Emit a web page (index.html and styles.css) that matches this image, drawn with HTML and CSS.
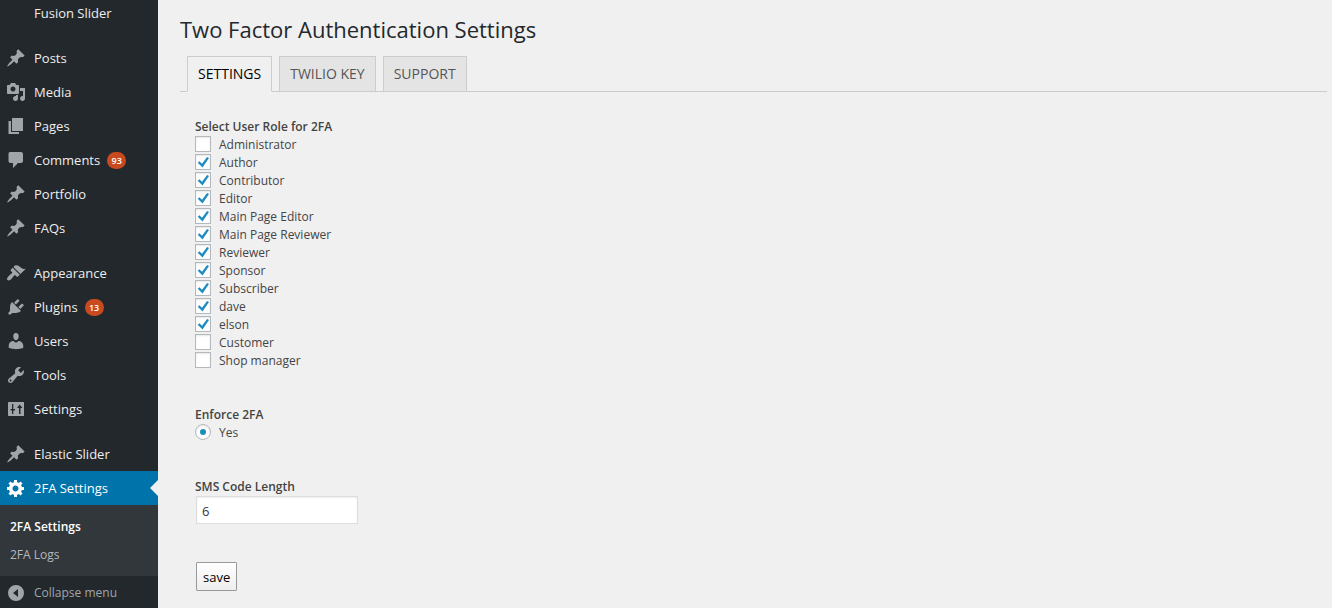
FILE: index.html
```html
<!DOCTYPE html>
<html lang="en">
<head>
<meta charset="utf-8">
<title>Two Factor Authentication Settings</title>
<link rel="stylesheet" href="styles.css">
</head>
<body>
<svg class="sprite" aria-hidden="true">
  <symbol id="pin" viewBox="0 0 20 20"><path d="M10.44 3.02l1.82-1.82 6.36 6.35-1.83 1.82c-1.05-.68-2.48-.57-3.41.36l-.75.75c-.92.93-1.04 2.35-.35 3.41l-1.83 1.82-2.41-2.41-2.8 2.79c-.42.42-3.38 2.71-3.8 2.29s1.86-3.39 2.28-3.81l2.79-2.79L4.1 9.36l1.83-1.82c1.05.69 2.48.57 3.4-.36l.75-.75c.93-.92 1.05-2.35.36-3.41z"/></symbol>
</svg>
<div class="layout">
  <nav class="sidebar">
    <ul class="menu">
      <li><a class="item item-first" href="#">Fusion Slider</a></li>
      <li class="gap-first"></li>
      <li><a class="item" href="#"><svg class="icon"><use href="#pin"/></svg>Posts</a></li>
      <li><a class="item" href="#"><svg class="icon" viewBox="0 0 20 20"><path d="M13 11V4c0-.55-.45-1-1-1h-1.67L9 1H5L3.67 3H2c-.55 0-1 .45-1 1v7c0 .55.45 1 1 1h10c.55 0 1-.45 1-1zM7 4.5c1.38 0 2.5 1.12 2.5 2.5S8.38 9.5 7 9.5 4.5 8.38 4.5 7 5.62 4.5 7 4.5zM14 6h5v10.5c0 1.38-1.12 2.5-2.5 2.5S14 17.88 14 16.5s1.12-2.5 2.5-2.5c.17 0 .34.02.5.05V9h-3V6zm-4 8.05V13h2v3.5c0 1.38-1.12 2.5-2.5 2.5S7 17.88 7 16.5 8.12 14 9.5 14c.17 0 .34.02.5.05z"/></svg>Media</a></li>
      <li><a class="item" href="#"><svg class="icon" viewBox="0 0 20 20"><path d="M6 15V2h11v13H6zm-1 1h8v2H2.500V5H5v11z"/></svg>Pages</a></li>
      <li><a class="item" href="#"><svg class="icon" viewBox="0 0 20 20"><path d="M4 2h11c1.1 0 2 .9 2 2v7c0 1.1-.9 2-2 2h-3l-5 5v-5H4.500c-1.100 0-2-.9-2-2V4c0-1.100.6-2 1.500-2z"/></svg>Comments<span class="badge">93</span></a></li>
      <li><a class="item" href="#"><svg class="icon"><use href="#pin"/></svg>Portfolio</a></li>
      <li><a class="item" href="#"><svg class="icon"><use href="#pin"/></svg>FAQs</a></li>
      <li class="gap"></li>
      <li><a class="item" href="#"><svg class="icon" viewBox="0 0 20 20"><path d="M14.48 11.06L7.41 3.99l1.5-1.5c.5-.56 2.3-.47 3.51.32 1.21.8 1.43 1.28 2.91 2.1 1.18.64 2.45 1.26 4.45.85zm-.71.71L6.7 4.7 4.93 6.47c-.39.39-.39 1.02 0 1.41l1.06 1.06c.39.39.39 1.03 0 1.42-.6.6-1.43 1.11-2.21 1.69-.35.26-.7.53-1.01.84C1.43 14.23.4 16.08 1.4 17.07c.99 1 2.84-.03 4.18-1.36.31-.31.58-.66.85-1.02.57-.78 1.08-1.61 1.69-2.21.39-.39 1.02-.39 1.41 0l1.06 1.06c.39.39 1.02.39 1.41 0z"/></svg>Appearance</a></li>
      <li><a class="item" href="#"><svg class="icon" viewBox="0 0 20 20"><path d="M13.11 4.36L9.87 7.6 8 5.73l3.24-3.24c.35-.34 1.05-.2 1.56.32.52.51.66 1.21.31 1.55zm-8 1.77l.91-1.12 9.01 9.01-1.19.84c-.71.71-2.63 1.16-3.82 1.16H6.14L4.9 17.26c-.59.59-1.54.59-2.12 0-.59-.58-.59-1.53 0-2.12l1.24-1.24v-3.88c0-1.13.4-3.19 1.09-3.89zm7.26 3.97l3.24-3.24c.34-.35 1.04-.21 1.55.31.52.51.66 1.21.31 1.55l-3.24 3.25z"/></svg>Plugins<span class="badge">13</span></a></li>
      <li><a class="item" href="#"><svg class="icon" viewBox="0 0 20 20"><path d="M10 9.25c-2.27 0-2.73-3.44-2.73-3.44C7 4.02 7.82 2 9.97 2c2.16 0 2.98 2.02 2.71 3.81 0 0-.41 3.44-2.68 3.44zm0 2.57L12.72 10c2.39 0 4.52 2.33 4.52 4.53v2.49s-3.65 1.13-7.24 1.13c-3.65 0-7.24-1.13-7.24-1.13v-2.49c0-2.25 1.94-4.48 4.47-4.48z"/></svg>Users</a></li>
      <li><a class="item" href="#"><svg class="icon" viewBox="0 0 20 20"><path d="M16.68 9.77c-1.34 1.34-3.3 1.67-4.95.99l-5.41 6.52c-.99.99-2.59.99-3.58 0s-.99-2.59 0-3.57l6.52-5.42c-.68-1.65-.35-3.61.99-4.95 1.28-1.28 3.12-1.62 4.72-1.06l-2.89 2.89 2.82 2.82 2.86-2.87c.53 1.58.18 3.39-1.08 4.65zM3.81 16.21c.4.39 1.04.39 1.43 0 .4-.4.4-1.04 0-1.43-.39-.4-1.03-.4-1.43 0-.39.39-.39 1.03 0 1.43z"/></svg>Tools</a></li>
      <li><a class="item" href="#"><svg class="icon" viewBox="0 0 20 20"><path fill-rule="evenodd" d="M3 3h15v14H3c-.6 0-1-.4-1-1V4c0-.6.4-1 1-1zM6 5h1.300v5H9v1.500H7.300V15H6v-3.500H4.500V10H6zM13 15V9h-2l2.600-3.500L16.500 9h-2v6z"/></svg>Settings</a></li>
      <li class="gap"></li>
      <li><a class="item" href="#"><svg class="icon"><use href="#pin"/></svg>Elastic Slider</a></li>
      <li>
        <a class="item item-current" href="#"><svg class="icon" viewBox="0 0 20 20"><path d="M18 12h-2.18c-.17.7-.44 1.35-.81 1.93l1.54 1.54-2.1 2.1-1.54-1.54c-.58.36-1.23.63-1.91.79V19H8v-2.18c-.68-.16-1.33-.43-1.91-.79l-1.54 1.54-2.12-2.12 1.54-1.54c-.36-.58-.63-1.23-.79-1.91H1V9.03h2.17c.16-.7.44-1.35.8-1.94L2.43 5.55l2.1-2.1 1.54 1.54c.58-.37 1.24-.64 1.93-.81V2h3v2.18c.68.16 1.33.43 1.91.79l1.54-1.54 2.12 2.12-1.54 1.54c.36.59.64 1.24.8 1.94H18V12zm-8.5 1.5c1.66 0 3-1.34 3-3s-1.34-3-3-3-3 1.34-3 3 1.34 3 3 3z"/></svg>2FA Settings</a>
        <ul class="submenu">
          <li><a class="subitem subitem-current" href="#">2FA Settings</a></li>
          <li><a class="subitem" href="#">2FA Logs</a></li>
        </ul>
      </li>
      <li><button class="item item-collapse" type="button"><svg class="icon" viewBox="0 0 20 20"><path fill-rule="evenodd" d="M10 2a8 8 0 1 0 0 16 8 8 0 0 0 0-16zM12 6v8L7 10z"/></svg>Collapse menu</button></li>
    </ul>
  </nav>

  <main class="content">
    <h1 class="title">Two Factor Authentication Settings</h1>
    <div class="tabs">
      <a class="tab tab-active" href="#">SETTINGS</a>
      <a class="tab" href="#">TWILIO KEY</a>
      <a class="tab" href="#">SUPPORT</a>
    </div>
    <form class="form">
      <fieldset class="group">
        <legend class="heading">Select User Role for 2FA</legend>
        <label class="choice"><input class="check" type="checkbox">Administrator</label>
        <label class="choice"><input class="check" type="checkbox" checked>Author</label>
        <label class="choice"><input class="check" type="checkbox" checked>Contributor</label>
        <label class="choice"><input class="check" type="checkbox" checked>Editor</label>
        <label class="choice"><input class="check" type="checkbox" checked>Main Page Editor</label>
        <label class="choice"><input class="check" type="checkbox" checked>Main Page Reviewer</label>
        <label class="choice"><input class="check" type="checkbox" checked>Reviewer</label>
        <label class="choice"><input class="check" type="checkbox" checked>Sponsor</label>
        <label class="choice"><input class="check" type="checkbox" checked>Subscriber</label>
        <label class="choice"><input class="check" type="checkbox" checked>dave</label>
        <label class="choice"><input class="check" type="checkbox" checked>elson</label>
        <label class="choice"><input class="check" type="checkbox">Customer</label>
        <label class="choice"><input class="check" type="checkbox">Shop manager</label>
      </fieldset>
      <fieldset class="group">
        <legend class="heading">Enforce 2FA</legend>
        <label class="choice"><input class="radio" type="radio" name="enforce" checked>Yes</label>
      </fieldset>
      <div class="group">
        <label class="heading" for="length">SMS Code Length</label>
        <input class="field" id="length" type="text" value="6">
      </div>
      <button class="save" type="button">save</button>
    </form>
  </main>
</div>
</body>
</html>
```

FILE: styles.css
```css
* {
  box-sizing: border-box;
}

body {
  margin: 0;
  background: #f0f0f0;
  color: #444;
  font-family: "Open Sans", "Noto Sans", sans-serif;
  font-size: 12px;
  line-height: 18px;
}

ul {
  margin: 0;
  padding: 0;
  list-style: none;
}

.sprite {
  display: none;
}

.layout {
  display: flex;
  min-height: 100vh;
}

.sidebar {
  flex: none;
  width: 158px;
  background: #23282d;
}

.item {
  display: flex;
  align-items: center;
  gap: 8px;
  width: 100%;
  height: 34px;
  padding: 0 6px;
  border: 0;
  background: none;
  color: #eee;
  font: inherit;
  font-size: 13px;
  text-decoration: none;
  white-space: nowrap;
}

.item-first {
  height: 26px;
  padding-left: 34px;
}

.gap-first {
  height: 15px;
}

.gap {
  height: 11px;
}

.icon {
  flex: none;
  width: 20px;
  height: 20px;
  fill: #a0a5aa;
}

.item-current {
  position: relative;
  background: #0073aa;
  color: #fff;
}

.item-current .icon {
  fill: #fff;
}

.item-current::after {
  content: "";
  position: absolute;
  top: 9px;
  right: 0;
  border: 8px solid transparent;
  border-left: 0;
  border-right-color: #f0f0f0;
}

.item-collapse {
  height: 32px;
  padding-top: 2px;
  color: #a0a5aa;
  font-size: 12px;
}

.badge {
  min-width: 19px;
  margin-left: -1px;
  border-radius: 9px;
  background: #ca4a1f;
  color: #fff;
  font-size: 9px;
  font-weight: 600;
  line-height: 17px;
  text-align: center;
}

.submenu {
  padding: 8px 0 7px;
  background: #32373c;
}

.subitem {
  display: block;
  padding: 5px 10px;
  color: #b4b9be;
  text-decoration: none;
}

.subitem-current {
  color: #fff;
  font-weight: 600;
}

.content {
  flex: 1;
  min-width: 0;
  padding: 13px 5px 16px 22px;
}

.title {
  margin: 0 0 11px;
  color: #23282d;
  font-size: 22px;
  font-weight: 400;
  line-height: 32px;
}

.tabs {
  display: flex;
  gap: 7px;
  padding: 0 7px;
  border-bottom: 1px solid #ccc;
}

.tab {
  margin-bottom: -1px;
  padding: 5px 10px;
  border: 1px solid #ccc;
  background: #e4e4e4;
  color: #555;
  font-size: 14px;
  font-weight: 500;
  line-height: 24px;
  text-decoration: none;
}

.tab-active {
  border-bottom-color: #f0f0f0;
  background: #f0f0f0;
  color: #000;
}

.form {
  padding: 26px 15px 0;
}

.group {
  margin: 0 0 36px;
  padding: 0;
  border: 0;
}

.heading {
  display: block;
  padding: 0;
  font-weight: 600;
}

.choice {
  display: flex;
  align-items: center;
  gap: 8px;
}

.check,
.radio {
  appearance: none;
  display: grid;
  place-items: center;
  width: 16px;
  height: 16px;
  margin: 0 0 2px;
  border: 1px solid #b4b9be;
  background: #fff;
  box-shadow: inset 0 1px 2px rgba(0, 0, 0, 0.1);
}

.check:checked::before {
  content: "";
  width: 12px;
  height: 12px;
  background: #1e8cbe;
  clip-path: polygon(6% 56%, 20% 44%, 42% 64%, 84% 8%, 100% 16%, 46% 96%);
}

.radio {
  border-radius: 50%;
}

.radio:checked::before {
  content: "";
  width: 6px;
  height: 6px;
  border-radius: 50%;
  background: #1e8cbe;
}

.field {
  display: block;
  width: 162px;
  height: 28px;
  margin: 1px;
  padding: 4px 5px 2px;
  border: 1px solid #ddd;
  background: #fff;
  box-shadow: inset 0 1px 2px rgba(0, 0, 0, 0.07);
  color: #32373c;
  font: inherit;
  font-size: 13px;
}

.group .field {
  margin-top: 0;
}

.save {
  margin: 2px 1px 0;
  padding: 6px 6px 4px;
  border: 1px solid #999;
  border-radius: 1px;
  background: linear-gradient(#fff, #eee);
  color: #000;
  font: inherit;
  font-size: 13px;
  line-height: 17px;
}
```
